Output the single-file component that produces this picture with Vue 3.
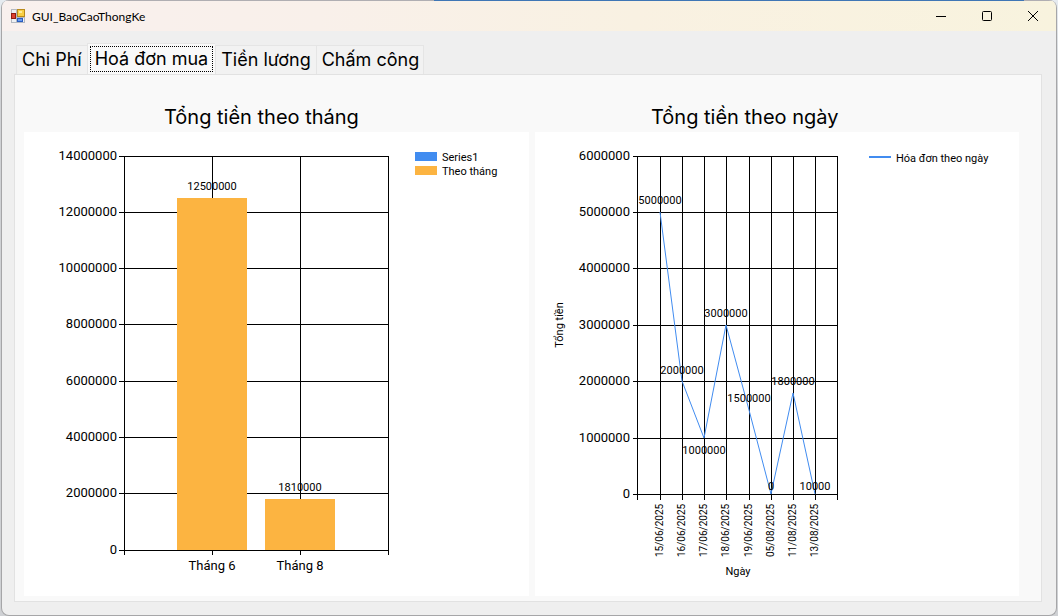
<script setup>
import { ref } from 'vue'

const tabs = ['Chi Phí', 'Hoá đơn mua', 'Tiền lương', 'Chấm công']
const active = ref(1)

const barPlot = { left: 100, right: 364, top: 24, bottom: 418 }
const barMax = 14000000
const barTicks = [0, 2, 4, 6, 8, 10, 12, 14].map((n) => n * 1000000)
const barY = (v) =>
  Math.floor(barPlot.bottom - (v / barMax) * (barPlot.bottom - barPlot.top))
const bars = [
  { name: 'Tháng 6', value: 12500000, x: 188 },
  { name: 'Tháng 8', value: 1810000, x: 276 }
]

const linePlot = { left: 102, right: 302, base: 362.2, height: 338.6 }
const lineMax = 6000000
const lineTicks = [0, 1, 2, 3, 4, 5, 6].map((n) => n * 1000000)
const lineY = (v) => Math.round(linePlot.base - (v / lineMax) * linePlot.height)
const days = [
  { name: '15/06/2025', value: 5000000, dy: -8 },
  { name: '16/06/2025', value: 2000000, dy: -7 },
  { name: '17/06/2025', value: 1000000, dy: 16 },
  { name: '18/06/2025', value: 3000000, dy: -8 },
  { name: '19/06/2025', value: 1500000, dy: -8 },
  { name: '05/08/2025', value: 0, dy: -4 },
  { name: '11/08/2025', value: 1800000, dy: -8 },
  { name: '13/08/2025', value: 10000, dy: -4 }
].map((d, i) => ({
  ...d,
  x: Math.round(linePlot.left + ((i + 1) * (linePlot.right - linePlot.left)) / 9 + 0.4),
  y: lineY(d.value)
}))
const linePoints = days.map((d) => `${d.x},${d.y}`).join(' ')
</script>

<template>
  <div class="desktop">
    <div class="window">
      <header class="titlebar">
        <svg class="app-icon" width="14" height="14" viewBox="0 0 14 14" aria-hidden="true">
          <rect width="14" height="14" fill="#b4b8c0" />
          <rect x="1" y="1" width="4" height="3" fill="#eef0f4" />
          <rect x="1" y="10" width="4" height="3" fill="#eef0f4" />
          <rect x="6" y="9" width="7" height="4" fill="#eef0f4" />
          <rect x="6" y="0" width="8" height="8" fill="#b98a1c" />
          <rect x="7" y="1" width="6" height="6" fill="#f8cf45" />
          <rect x="8" y="2" width="3" height="2" fill="#fdeb9c" />
          <rect x="0" y="4" width="5" height="6" fill="#8f1c12" />
          <rect x="1" y="5" width="3" height="4" fill="#dd4030" />
          <rect x="6" y="9" width="6" height="4" fill="#2a5cc0" />
          <rect x="7" y="10" width="4" height="2" fill="#6a9cf0" />
        </svg>
        <h1>GUI_BaoCaoThongKe</h1>
        <div class="controls">
          <button type="button" aria-label="Minimize">
            <svg width="10" height="10" viewBox="0 0 10 10"><path d="M0 5h10v1H0z" /></svg>
          </button>
          <button type="button" aria-label="Maximize">
            <svg width="10" height="10" viewBox="0 0 10 10">
              <rect x=".5" y=".5" width="9" height="9" rx="1" fill="none" stroke="#000" />
            </svg>
          </button>
          <button type="button" aria-label="Close">
            <svg width="10" height="10" viewBox="0 0 10 10">
              <path d="M0 0l10 10M10 0L0 10" fill="none" stroke="#000" />
            </svg>
          </button>
        </div>
      </header>

      <main>
        <div class="tabs" role="tablist">
          <button
            v-for="(tab, i) in tabs"
            :key="tab"
            type="button"
            role="tab"
            :aria-selected="i === active"
            :class="{ active: i === active }"
            @click="active = i"
          >
            <span>{{ tab }}</span>
          </button>
        </div>

        <div class="page" role="tabpanel">
          <section>
            <h2 class="month">Tổng tiền theo tháng</h2>
            <svg class="chart" viewBox="0 0 505 464">
              <g v-for="t in barTicks" :key="t">
                <rect :x="barPlot.left - 5" :y="barY(t)" width="270" height="1" />
                <text class="axis" x="93" :y="barY(t) + 4" text-anchor="end">{{ t }}</text>
              </g>
              <rect :x="barPlot.left" y="24" width="1" height="399" />
              <rect :x="barPlot.right" y="24" width="1" height="399" />
              <g v-for="b in bars" :key="b.name">
                <rect :x="b.x" y="24" width="1" height="399" />
                <rect
                  class="bar"
                  :x="b.x - 35"
                  :y="barY(b.value)"
                  width="70"
                  :height="barPlot.bottom - barY(b.value)"
                />
                <text class="value" :x="b.x" :y="barY(b.value) - 8" text-anchor="middle">{{ b.value }}</text>
                <text class="axis" :x="b.x" y="438" text-anchor="middle">{{ b.name }}</text>
              </g>
              <rect class="blue" x="391" y="20" width="22" height="9" />
              <text class="value" x="418" y="29">Series1</text>
              <rect class="bar" x="391" y="34" width="22" height="9" />
              <text class="value" x="418" y="43">Theo tháng</text>
            </svg>
          </section>

          <section>
            <h2 class="day">Tổng tiền theo ngày</h2>
            <svg class="chart" viewBox="0 0 484 464">
              <g v-for="t in lineTicks" :key="t">
                <rect :x="linePlot.left - 4" :y="lineY(t)" width="205" height="1" />
                <text class="axis" x="95" :y="lineY(t) + 4" text-anchor="end">{{ t }}</text>
              </g>
              <rect :x="linePlot.left" y="24" width="1" height="344" />
              <rect :x="linePlot.right" y="24" width="1" height="344" />
              <rect v-for="d in days" :key="d.name" :x="d.x" y="24" width="1" height="344" />
              <polyline :points="linePoints" />
              <g v-for="d in days" :key="d.name">
                <text class="value" :x="d.x" :y="d.y + d.dy" text-anchor="middle">{{ d.value }}</text>
                <text
                  class="date"
                  :transform="`translate(${d.x + 3} 425) rotate(-90)`"
                >{{ d.name }}</text>
              </g>
              <text class="value" transform="translate(28 193) rotate(-90)" text-anchor="middle">Tổng tiền</text>
              <text class="value" x="203" y="443" text-anchor="middle">Ngày</text>
              <rect class="blue" x="334" y="24" width="22" height="2" />
              <text class="value" x="361" y="30">Hóa đơn theo ngày</text>
            </svg>
          </section>
        </div>
      </main>
    </div>
  </div>
</template>

<style>
body {
  margin: 0;
}
</style>

<style scoped>
.desktop {
  min-height: 100vh;
  box-sizing: border-box;
  padding: 0 1px;
  display: flex;
  background: linear-gradient(180deg, #e6ebf0 0, #cfd1d4 100px);
  font-family: Roboto, "Liberation Sans", sans-serif;
  color: #000;
}
.window {
  flex: 1;
  min-width: 0;
  border: 1px solid #a6a6a8;
  border-top: 0;
  border-radius: 8px;
  background: #efefef;
  overflow: hidden;
}
.titlebar {
  display: flex;
  align-items: center;
  height: 30px;
  padding-left: 9px;
  background: linear-gradient(90deg, #f9f0ee 0%, #f9f0ea 30%, #f9f1e2 60%, #f8f3de 100%);
}
.window::before {
  content: "";
  display: block;
  height: 1px;
  background: linear-gradient(90deg, #b0aeb2 0 41%, #3f76b5 41% 97%, #b0aeb2 97%);
}
h1 {
  margin: 0 0 0 7px;
  font: 12px Lato, "Open Sans", sans-serif;
}
.controls {
  margin-left: auto;
  display: flex;
  align-self: stretch;
}
.controls button {
  width: 46px;
  padding: 0;
  border: 0;
  background: none;
}
.controls svg {
  display: block;
  margin: 0 auto;
}
main {
  padding: 12px 14px 13px 12px;
}
.tabs {
  display: flex;
  align-items: flex-end;
  padding-left: 2px;
}
.tabs button {
  height: 29px;
  padding: 0 5px;
  border: 1px solid #e5e5e5;
  border-bottom: 0;
  border-right: 0;
  background: #f2f2f2;
  font: 18px Inter, "Liberation Sans", sans-serif;
  color: #000;
}
.tabs button:last-child {
  padding-right: 4px;
  border-right: 1px solid #e5e5e5;
}
.tabs button.active {
  height: 31px;
  padding: 2px;
  background: #f9f9f9;
}
.tabs button span {
  display: block;
  line-height: 26px;
}
.tabs button.active span {
  padding: 0 4px;
  border: 1px dotted #000;
  line-height: 24px;
}
.page {
  display: grid;
  grid-template-columns: 505fr 484fr;
  gap: 6px;
  padding: 29px 22px 5px 9px;
  border: 1px solid #e2e2e2;
  background: #f9f9f9;
}
h2 {
  margin: 0;
  height: 28px;
  font: 20px/26px Inter, "Liberation Sans", sans-serif;
}
.month {
  padding-left: 140px;
}
.day {
  padding-left: 116px;
}
.chart {
  display: block;
  width: 100%;
  background: #fff;
}
.axis {
  font-size: 13px;
}
.value {
  font-size: 11px;
}
.date {
  font-size: 10px;
}
.bar {
  fill: #fcb441;
}
.blue {
  fill: #418cf0;
}
polyline {
  fill: none;
  stroke: #418cf0;
}
</style>
